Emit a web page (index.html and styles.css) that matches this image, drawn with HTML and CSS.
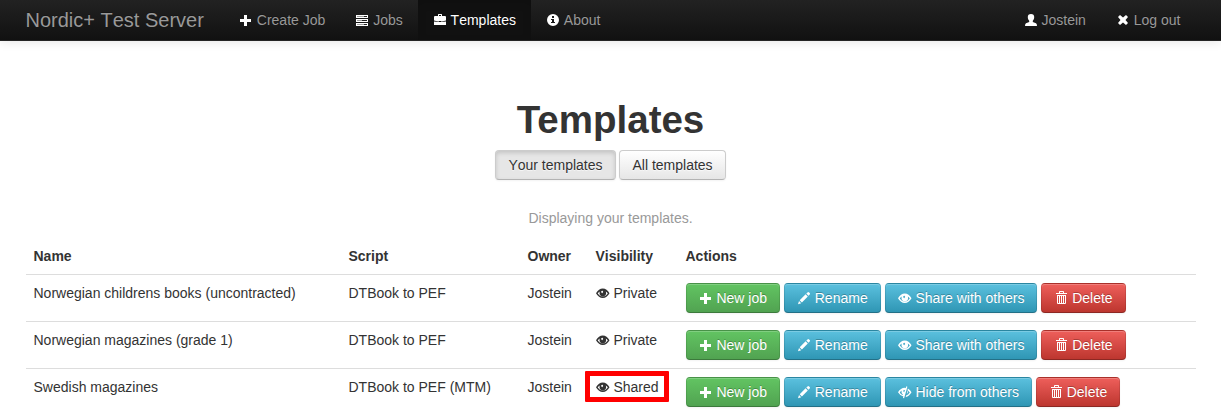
FILE: index.html
```
<!DOCTYPE html>
<html lang="en">
<head>
<meta charset="utf-8">
<title>Templates</title>
<link rel="stylesheet" href="styles.css">
</head>
<body>
<svg class="defs" width="0" height="0">
  <symbol id="plus" viewBox="0 0 14 14"><path d="M5 2h3v4h4v3H8v4H5V9H1V6h4z"/></symbol>
  <symbol id="tasks" viewBox="0 0 14 14"><path d="M1 2h12v3H1zM1 6h12v3H1zM1 10h12v3H1z"/><path fill="#999" d="M2 3h7v1H2zM2 7h5v1H2zM2 11h7v1H2z"/><path fill="#222" d="M9 3h3v1H9zM7 7h5v1H7zM9 11h3v1H9z"/></symbol>
  <symbol id="briefcase" viewBox="0 0 14 14"><path fill-rule="evenodd" d="M5 3V1.600q0-.6.6-.6h2.800q.6 0 .6.6V3h3q1 0 1 1v3.500L9 8.500H8V8H6v.5H5L1 7.500V4q0-1 1-1zM6 2v1h2V2zM1 8.500l4 .5h4l4-.5V12H1z"/></symbol>
  <symbol id="info" viewBox="0 0 14 14"><path fill-rule="evenodd" d="M7 1a6 6 0 1 0 0 12A6 6 0 0 0 7 1zM6 3h2v2H6zM5 6h3v3h1v1H5V9h1V7H5z"/></symbol>
  <symbol id="user" viewBox="0 0 14 14"><path d="M7 1c2.200 0 3.200 1.200 3.200 3 0 1.600-.6 3-1.400 3.800v1.100l3.200 1.400q1 .6 1 2.700H1q0-2.100 1-2.700l3.200-1.400V7.800C4.400 7 3.800 5.600 3.800 4c0-1.800 1-3 3.200-3z"/></symbol>
  <symbol id="remove" viewBox="0 0 14 14"><path d="M4 2 7 4.600 10 2l2 2-2.500 3 2.500 3-2 2-3-2.600L4 12l-2-2 2.500-3L2 4z"/></symbol>
  <symbol id="pencil" viewBox="0 0 14 14"><path d="M10.500 1.400q.8-.8 1.600 0l.6.600q.8.800 0 1.600L11.500 4.800 9.300 2.600zM8.600 3.300l2.200 2.200-5.900 5.900L2.700 9.200zM2 10l2.200 2.200L1 13.300z"/></symbol>
  <symbol id="eye" viewBox="0 0 14 14"><path fill-rule="evenodd" d="M0 7.300Q2.700 2.600 6.800 2.600t6.700 4.700Q10.900 12 6.800 12T0 7.300zm1.700.2q2 3.100 5.100 3.100t5-3.100q-.9-1.500-2.100-2.100.4.700.4 1.500a3.300 3.300 0 0 1-6.600 0q0-.8.4-1.500-1.300.6-2.200 2.100zM5 6.100l1.200 1.100 1-1.300-.5-1.100Q5.400 4.800 5 6.100z"/></symbol>
  <symbol id="hide" viewBox="0 0 14 14"><path fill-rule="evenodd" d="M0 7.300Q2.700 2.800 6.800 2.800l1 .1.500-1.600 1.100.4-3.300 11.500-1.100-.3.400-1.300Q2.100 10.800 0 7.300zm1.700.2q1 1.600 2.900 2.500l.3-.7Q3.500 8.500 3.500 6.900q0-.8.400-1.500-1.300.6-2.200 2.100zM5 6.100l1.200 1.100L7 4.900q-1.500-.2-2 1.200zM9.900 3.500q2.100 1.100 3.600 3.800-2.200 4.100-5.800 4.700l.4-1.500q2.100-.6 3.700-3-.9-1.400-1.900-2.100L9.600 5z"/><path d="M9.700 5.300q1.200 2-.9 3.700z"/></symbol>
  <symbol id="trash" viewBox="0 0 14 14"><path fill-rule="evenodd" transform="translate(1 0)" d="M4 2V.8Q4 0 4.800 0h3.400Q9 0 9 .8V2h3v1H1V2zM5 1v1h3V1zM2 4h9v8q0 1-1 1H3q-1 0-1-1zm1 1v7h1V5zm2 0v7h1V5zm2 0v7h1V5zm2 0v7h1V5z"/></symbol>
</svg>
<header class="navbar">
  <div class="container bar">
    <a class="brand">Nordic+ Test Server</a>
    <nav class="nav">
      <a><svg class="icon"><use href="#plus"/></svg> Create Job</a>
      <a><svg class="icon"><use href="#tasks"/></svg> Jobs</a>
      <a class="active"><svg class="icon"><use href="#briefcase"/></svg> Templates</a>
      <a><svg class="icon"><use href="#info"/></svg> About</a>
    </nav>
    <nav class="nav account">
      <a><svg class="icon"><use href="#user"/></svg> Jostein</a>
      <a><svg class="icon"><use href="#remove"/></svg> Log out</a>
    </nav>
  </div>
</header>
<main class="container">
  <div class="heading">
    <h1>Templates</h1>
    <div class="filters"><a class="btn pressed">Your templates</a> <a class="btn">All templates</a></div>
    <p>Displaying your templates.</p>
  </div>
  <table class="table">
    <colgroup><col class="c-name"><col class="c-script"><col class="c-owner"><col class="c-vis"><col></colgroup>
    <thead><tr><th>Name</th><th>Script</th><th>Owner</th><th>Visibility</th><th>Actions</th></tr></thead>
    <tbody>
      <tr>
        <td>Norwegian childrens books (uncontracted)</td><td>DTBook to PEF</td><td>Jostein</td>
        <td><svg class="icon"><use href="#eye"/></svg> Private</td>
        <td><a class="btn green"><svg class="icon"><use href="#plus"/></svg> New job</a> <a class="btn blue"><svg class="icon"><use href="#pencil"/></svg> Rename</a> <a class="btn blue"><svg class="icon"><use href="#eye"/></svg> Share with others</a> <a class="btn red"><svg class="icon"><use href="#trash"/></svg> Delete</a></td>
      </tr>
      <tr>
        <td>Norwegian magazines (grade 1)</td><td>DTBook to PEF</td><td>Jostein</td>
        <td><svg class="icon"><use href="#eye"/></svg> Private</td>
        <td><a class="btn green"><svg class="icon"><use href="#plus"/></svg> New job</a> <a class="btn blue"><svg class="icon"><use href="#pencil"/></svg> Rename</a> <a class="btn blue"><svg class="icon"><use href="#eye"/></svg> Share with others</a> <a class="btn red"><svg class="icon"><use href="#trash"/></svg> Delete</a></td>
      </tr>
      <tr>
        <td>Swedish magazines</td><td>DTBook to PEF (MTM)</td><td>Jostein</td>
        <td class="marked"><svg class="icon"><use href="#eye"/></svg> Shared</td>
        <td><a class="btn green"><svg class="icon"><use href="#plus"/></svg> New job</a> <a class="btn blue"><svg class="icon"><use href="#pencil"/></svg> Rename</a> <a class="btn blue"><svg class="icon"><use href="#hide"/></svg> Hide from others</a> <a class="btn red"><svg class="icon"><use href="#trash"/></svg> Delete</a></td>
      </tr>
    </tbody>
  </table>
</main>
</body>
</html>
```
FILE: styles.css
```
body {
  margin: 0;
  font: 14px/20px "Liberation Sans", Arial, sans-serif;
  font-kerning: none;
  color: #333;
  background: #fff;
  overflow: hidden;
}
.defs { display: block; }
.container { width: 1170px; margin: 0 auto; }
.navbar {
  height: 40px;
  border-bottom: 1px solid #252525;
  background: linear-gradient(#222, #111);
  box-shadow: 0 1px 10px rgba(0, 0, 0, .1);
}
.bar { display: flex; }
.brand {
  padding: 10px 20px 10px 0;
  font-size: 20px;
  color: #999;
  text-shadow: 0 -1px 0 rgba(0, 0, 0, .25);
}
.nav { display: flex; }
.nav a {
  padding: 10px 15px;
  color: #999;
  text-shadow: 0 -1px 0 rgba(0, 0, 0, .25);
}
.nav .active {
  color: #fff;
  background: #111;
  box-shadow: inset 0 3px 8px rgba(0, 0, 0, .125);
}
.account { margin-left: auto; }
.icon {
  display: inline-block;
  width: 14px;
  height: 14px;
  margin-top: 1px;
  vertical-align: text-top;
  fill: currentColor;
}
.nav .icon { fill: #fff; }
.heading { padding-top: 59px; text-align: center; }
h1 {
  margin: 0 0 10px;
  font-size: 38.5px;
  line-height: 40px;
  font-kerning: normal;
}
.filters { height: 30px; }
.heading p { margin: 28px 0 10px; color: #999; }
.btn {
  display: inline-block;
  box-sizing: border-box;
  height: 30px;
  padding: 4px 12px;
  border: 1px solid #ccc;
  border-color: #ccc #ccc #b3b3b3;
  border-radius: 4px;
  background: linear-gradient(#fff, #e6e6e6) padding-box;
  box-shadow: inset 0 1px 0 rgba(255, 255, 255, .2), 0 1px 2px rgba(0, 0, 0, .05);
  text-shadow: 0 1px 1px rgba(255, 255, 255, .75);
  vertical-align: middle;
}
.pressed {
  background: #e6e6e6;
  box-shadow: inset 0 2px 4px rgba(0, 0, 0, .15), 0 1px 2px rgba(0, 0, 0, .05);
}
.green, .blue, .red {
  color: #fff;
  text-shadow: 0 -1px 0 rgba(0, 0, 0, .25);
  border-color: rgba(0, 0, 0, .1) rgba(0, 0, 0, .1) rgba(0, 0, 0, .25);
}
.green { background: linear-gradient(#62c462, #51a351) #51a351; }
.blue { background: linear-gradient(#5bc0de, #2f96b4) #2f96b4; }
.red { background: linear-gradient(#ee5f5b, #bd362f) #bd362f; }
.green, .blue, .red { background-repeat: repeat-x; }
.table {
  width: 1170px;
  table-layout: fixed;
  border-collapse: separate;
  border-spacing: 0;
}
.c-name { width: 315px; }
.c-script { width: 179px; }
.c-owner { width: 68px; }
.c-vis { width: 90px; }
th, td { padding: 8px; text-align: left; vertical-align: top; white-space: nowrap; }
td { height: 30px; border-top: 1px solid #ddd; }
.marked { position: relative; }
.marked::after {
  content: "";
  position: absolute;
  left: -3px;
  top: 2px;
  width: 74px;
  height: 21px;
  border: 5px solid #f00;
  border-radius: 1px;
}
```
